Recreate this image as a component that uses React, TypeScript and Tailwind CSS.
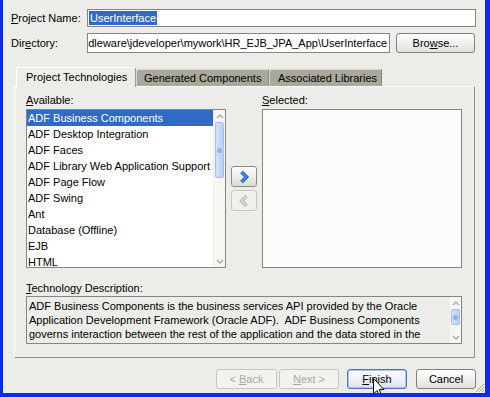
import React from 'react';

const items = [
  'ADF Business Components',
  'ADF Desktop Integration',
  'ADF Faces',
  'ADF Library Web Application Support',
  'ADF Page Flow',
  'ADF Swing',
  'Ant',
  'Database (Offline)',
  'EJB',
  'HTML',
];

function Chevron({ up }: { up?: boolean }) {
  return (
    <svg width="8" height="5" viewBox="0 0 8 5">
      <path d={up ? 'M1 4 L4 1 L7 4' : 'M1 1 L4 4 L7 1'} fill="none" stroke="#a9a9a9" strokeWidth="1.4" />
    </svg>
  );
}

function ScrollBar({ thumbTop, thumbHeight }: { thumbTop: number; thumbHeight: number }) {
  return (
    <div className="w-[12px] h-full flex flex-col bg-[#f6f6f2] border-l border-[#eeeee8]">
      <div className="h-[12px] flex items-center justify-center shrink-0">
        <Chevron up />
      </div>
      <div className="shrink-0" style={{ height: thumbTop }} />
      <div
        className="shrink-0 mx-px rounded-[2px] border border-[#a7bfec] bg-gradient-to-r from-[#d4e2fb] to-[#b9cff6] flex items-center justify-center"
        style={{ height: thumbHeight }}
      >
        <div className="w-[5px] h-[5px] rounded-full bg-[#8fb0f0]" />
      </div>
      <div className="flex-1" />
      <div className="h-[12px] flex items-center justify-center shrink-0">
        <Chevron />
      </div>
    </div>
  );
}

function Button({ children, disabled, focused, className = '' }: { children: React.ReactNode; disabled?: boolean; focused?: boolean; className?: string }) {
  const tone = disabled
    ? 'border-[#c9c7ba] text-[#aca899] bg-[#f2f2ee]'
    : focused
    ? 'border-[#4f74c8] text-black bg-gradient-to-b from-[#ffffff] to-[#dde3ee] shadow-[inset_0_0_0_1px_#a9c2f2]'
    : 'border-[#7f7f7f] text-black bg-gradient-to-b from-[#ffffff] to-[#e2e2dc]';
  return (
    <div className={`h-[20px] rounded-[3px] border flex items-center justify-center ${tone} ${className}`}>
      <span>{children}</span>
    </div>
  );
}

function MoveButton({ disabled, left }: { disabled?: boolean; left?: boolean }) {
  return (
    <div
      className={`w-[26px] h-[21px] rounded-[3px] border flex items-center justify-center ${
        disabled ? 'border-[#c9c7ba] bg-[#f0f0ec]' : 'border-[#8a8a8a] bg-gradient-to-b from-[#ffffff] to-[#dcdcd6]'
      }`}
    >
      <svg width="12" height="14" viewBox="0 0 12 14">
        {left ? (
          <>
            <path d="M8.5 2 L3.5 7 L8.5 12" fill="none" stroke="#b4b4ac" strokeWidth="3.2" />
            <path d="M8.5 2 L3.5 7 L8.5 12" fill="none" stroke="#e4e4de" strokeWidth="1.2" />
          </>
        ) : (
          <>
            <path d="M3.5 2 L8.5 7 L3.5 12" fill="none" stroke="#1d55c0" strokeWidth="3.6" />
            <path d="M3.5 2 L8.5 7 L3.5 12" fill="none" stroke="#3f8ef0" strokeWidth="1.8" />
          </>
        )}
      </svg>
    </div>
  );
}

export default function App() {
  return (
    <div className="w-[490px] h-[397px] bg-[#0b2cf0] pl-[3px] pr-[5px] pb-[4px] font-['Liberation_Sans',Arial,sans-serif] text-[11px] text-black">
      <div className="relative h-full bg-[#ecece8] overflow-hidden">
        {/* project name */}
        <div className="flex items-center h-[18px] mt-[9px]">
          <div className="w-[84px] pl-[8px]">
            <u>P</u>roject Name:
          </div>
          <div className="w-[389px] h-[18px] border border-[#858585] bg-white flex items-center pl-[1px] overflow-hidden">
            <span className="bg-[#316ac5] text-white px-[1px] leading-[14px]">UserInterface</span>
          </div>
        </div>

        {/* directory */}
        <div className="flex items-center h-[20px] mt-[6px]">
          <div className="w-[84px] pl-[8px]">
            Dir<u>e</u>ctory:
          </div>
          <div className="w-[303px] h-[20px] border border-[#858585] bg-white flex items-center justify-end pr-[2px] overflow-hidden whitespace-nowrap">
            <span>dleware\jdeveloper\mywork\HR_EJB_JPA_App\UserInterface</span>
          </div>
          <Button className="w-[79px] ml-[6px]">
            Bro<u>w</u>se...
          </Button>
        </div>

        {/* tabs */}
        <div className="ml-[11px] mt-[14px] w-[461px]">
          <div className="flex items-end h-[19px] pl-[2px]">
            <div className="relative z-10 w-[120px] h-[20px] -mb-px bg-[#ecece8] border-t border-l border-white border-r border-r-[#9a9a94] rounded-t-[2px] flex items-center pl-[9px]">
              Project Technologies
            </div>
            <div className="w-[133px] h-[17px] bg-[#a9a89a] border-t border-l border-r border-t-[#d8d8d0] border-l-[#d8d8d0] border-r-[#8a8a82] rounded-tl-[3px] flex items-center pl-[7px]">
              Generated Components
            </div>
            <div className="w-[113px] h-[17px] bg-[#a9a89a] border-t border-l border-r border-t-[#d8d8d0] border-l-[#d8d8d0] border-r-[#8a8a82] rounded-tl-[3px] flex items-center pl-[8px]">
              Associated Libraries
            </div>
          </div>

          <div className="h-[272px] border-l border-t border-white border-r border-b border-r-[#8e8e8a] border-b-[#8e8e8a] pl-[11px] pt-[6px]">
            {/* lists */}
            <div className="flex gap-[5px]">
              <div>
                <div className="h-[14px] leading-[14px] mb-[2px]">
                  <u>A</u>vailable:
                </div>
                <div className="w-[200px] h-[159px] border border-[#858585] bg-white flex overflow-hidden">
                  <div className="flex-1">
                    {items.map((it, i) => (
                      <div
                        key={it}
                        className={`h-[16px] leading-[16px] pl-[1px] whitespace-nowrap ${i === 0 ? 'bg-[#316ac5] text-white' : ''}`}
                      >
                        {it}
                      </div>
                    ))}
                  </div>
                  <ScrollBar thumbTop={0} thumbHeight={56} />
                </div>
              </div>

              <div className="flex flex-col items-center justify-center gap-[3px] pt-[16px]">
                <MoveButton />
                <MoveButton disabled left />
              </div>

              <div>
                <div className="h-[14px] leading-[14px] mb-[2px]">
                  <u>S</u>elected:
                </div>
                <div className="w-[200px] h-[159px] border border-[#858585] bg-[#fbfdfb]" />
              </div>
            </div>

            {/* description */}
            <div className="h-[14px] leading-[14px] mt-[13px] mb-[1px]">
              <u>T</u>echnology Description:
            </div>
            <div className="w-[436px] h-[48px] border border-[#858585] bg-[#ecece8] flex">
              <div className="flex-1 pl-[2px] pt-[2px] leading-[14px] overflow-hidden">
                <div className="whitespace-nowrap">ADF Business Components is the business services API provided by the Oracle</div>
                <div className="whitespace-nowrap">Application Development Framework (Oracle ADF).&nbsp; ADF Business Components</div>
                <div className="whitespace-nowrap">governs interaction between the rest of the application and the data stored in the</div>
              </div>
              <ScrollBar thumbTop={0} thumbHeight={16} />
            </div>
          </div>
        </div>

        {/* bottom buttons */}
        <div className="flex justify-end mt-[11px] pr-[9px]">
          <Button disabled className="w-[61px]">
            &lt; <u>B</u>ack
          </Button>
          <Button disabled className="w-[60px] ml-[2px]">
            <u>N</u>ext &gt;
          </Button>
          <Button focused className="w-[60px] ml-[8px]">
            <u>F</u>inish
          </Button>
          <Button className="w-[60px] ml-[9px]">Cancel</Button>
        </div>

        {/* resize grip */}
        <svg className="absolute right-0 bottom-0" width="11" height="11" viewBox="0 0 11 11">
          <path d="M10 2 L2 10 M10 5 L5 10 M10 8 L8 10" stroke="#a8a8a0" strokeWidth="1" />
          <path d="M11 3 L3 11 M11 6 L6 11 M11 9 L9 11" stroke="#ffffff" strokeWidth="1" />
        </svg>

        {/* mouse cursor */}
        <svg className="absolute left-[370px] top-[378px]" width="13" height="20" viewBox="0 0 13 20">
          <path d="M0.5 0.5 L0.5 16 L4 12.5 L6.8 19 L9 18 L6.3 11.5 L11 11.5 Z" fill="#ffffff" stroke="#000000" strokeWidth="1" />
        </svg>
      </div>
    </div>
  );
}
